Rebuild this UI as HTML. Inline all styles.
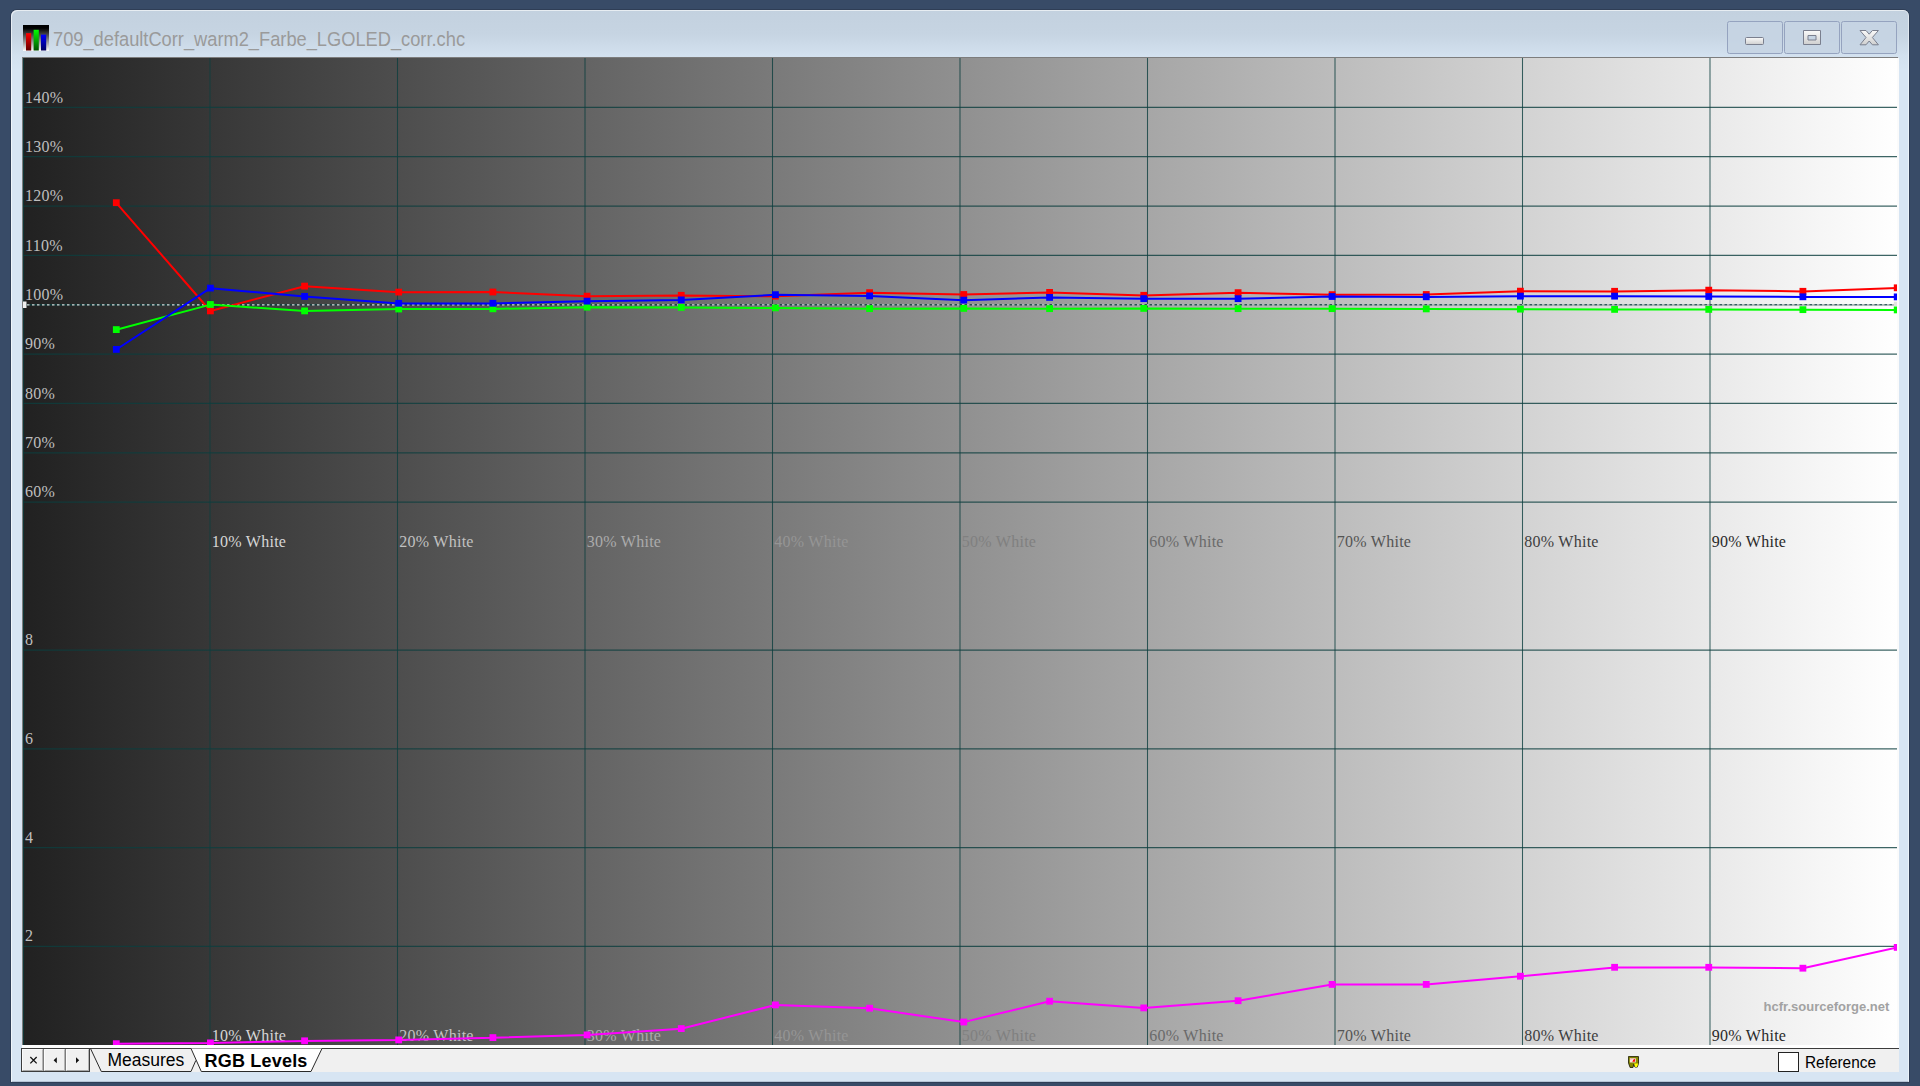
<!DOCTYPE html>
<html><head><meta charset="utf-8"><title>HCFR</title>
<style>
html,body{margin:0;padding:0;width:1920px;height:1086px;overflow:hidden;font-family:"Liberation Sans",sans-serif}
svg{display:block}
body{width:1920px;height:1086px;overflow:hidden;background:#384b67;position:relative;font-family:"Liberation Sans",sans-serif}
.abs{position:absolute}
#win{left:11px;top:10px;width:1898px;height:1072px;border-radius:6px 6px 0 0;
 background:linear-gradient(#c3d1df 0px,#c6d4e2 24px,#d3e1ef 46px,#d7e5f3 60px,#d7e5f3 100%);
 box-shadow:inset 1px 1px 0 0 rgba(255,255,255,.6),inset -1px 0 0 0 rgba(255,255,255,.45),inset 0 -1px 0 0 rgba(120,135,160,.35),0 0 0 1px rgba(40,52,72,.55)}
#title{left:53px;top:27px;font-size:20.5px;line-height:24px;color:#9a9a9a;white-space:nowrap;transform-origin:0 0;transform:scaleX(.8906)}
.btn{top:21px;width:54px;height:31px;border:1px solid #95a3bf;border-radius:2.5px;background:rgba(197,211,227,.85);box-sizing:content-box}
#chart{left:0;top:0}
.ax{font:16px "Liberation Serif",serif}
.xl{letter-spacing:.25px}
.yl{letter-spacing:.28px}
#edgeT{left:22px;top:57px;width:1876px;height:1px;background:#7d7d7d}
#edgeL{left:22px;top:57px;width:1px;height:989px;background:#7d7d7d}
#edgeR{left:1897px;top:58px;width:2px;height:990px;background:#fbfbfb}
#edgeB{left:22px;top:1045px;width:1877px;height:3px;background:#ffffff}
#strip{left:21px;top:1048px;width:1878px;height:24px;background:#f0f0f0;border-top:1px solid #3c3c3c;box-sizing:border-box}
#nav{left:21px;top:1048px;width:69px;height:24px;background:#3c3c3c}
.nb{top:1px;height:22px;width:21px;background:#f0f0f0;border:1px solid #fbfbfb;border-right-color:#b4b4b4;border-bottom-color:#a8a8a8;box-sizing:border-box}
.nd{top:1px;width:1px;height:22px;background:#7c7c7c}
#tabs{left:0;top:0}
.tab{top:1050px;font-size:17.5px;line-height:20px;color:#000;white-space:nowrap}
#ref{left:1805px;top:1052px;font-size:16.3px;line-height:20px;color:#000;white-space:nowrap;transform-origin:0 0;transform:scaleX(.945)}
#cb{left:1778px;top:1052px;width:21px;height:20px;box-sizing:border-box;border:1px solid #222;background:#fff}
</style></head><body>
<div id="win" class="abs"></div>
<svg class="abs" style="left:23px;top:25px" width="26" height="26" viewBox="0 0 26 27" preserveAspectRatio="none">
<defs><linearGradient id="ib" x1="0" x2="0" y1="0" y2="1"><stop offset="0" stop-color="#000"/><stop offset=".12" stop-color="#000"/><stop offset="1" stop-color="#fff"/></linearGradient>
<linearGradient id="ir" x1="0" x2="0" y1="0" y2="1"><stop offset="0" stop-color="#ff0000"/><stop offset="1" stop-color="#600000"/></linearGradient>
<linearGradient id="ig" x1="0" x2="0" y1="0" y2="1"><stop offset="0" stop-color="#00ff00"/><stop offset="1" stop-color="#005000"/></linearGradient>
<linearGradient id="iu" x1="0" x2="0" y1="0" y2="1"><stop offset="0" stop-color="#0000ff"/><stop offset="1" stop-color="#000060"/></linearGradient></defs>
<rect width="26" height="27" fill="url(#ib)"/>
<rect x="3" y="8.5" width="5.2" height="18" fill="url(#ir)"/>
<rect x="10.6" y="5" width="5.2" height="21.5" fill="url(#ig)"/>
<rect x="18" y="10" width="5.2" height="16.5" fill="url(#iu)"/>
</svg>
<div id="title" class="abs">709_defaultCorr_warm2_Farbe_LGOLED_corr.chc</div>
<div class="abs btn" style="left:1727px"></div>
<div class="abs btn" style="left:1784px"></div>
<div class="abs btn" style="left:1841px"></div>
<svg class="abs" style="left:1727px;top:21px" width="172" height="34" viewBox="1727 21 172 34">
<defs><linearGradient id="gl" x1="0" x2="0" y1="0" y2="1"><stop offset="0" stop-color="#fafafa"/><stop offset="1" stop-color="#cfcfcf"/></linearGradient></defs>
<rect x="1745.5" y="37.5" width="18" height="7" rx="1" fill="url(#gl)" stroke="#7a7f8e" stroke-width="1"/>
<path d="M1803.5 30.5h17v14h-17z M1808 35.5v4.5h8v-4.5z" fill="url(#gl)" fill-rule="evenodd" stroke="#7a7f8e" stroke-width="1" stroke-linejoin="miter"/>
<path d="M1860 30.5H1866L1869.2 34.2L1872.4 30.5H1878.4L1872.4 37.5L1878.4 44.8H1872.4L1869.2 41L1866 44.8H1860L1866 37.5Z" fill="url(#gl)" stroke="#7a7f8e" stroke-width="1" stroke-linejoin="round"/>
</svg>
<div id="edgeT" class="abs"></div><div id="edgeL" class="abs"></div><div id="edgeR" class="abs"></div><div id="edgeB" class="abs"></div>
<div class="abs" style="left:0;top:0;width:1920px;height:1086px"><svg id="chart" width="1920" height="1086" viewBox="0 0 1920 1086">
<defs><linearGradient id="bg" x1="23" x2="1897" y1="0" y2="0" gradientUnits="userSpaceOnUse"><stop offset="0" stop-color="#212121"/><stop offset="1" stop-color="#ffffff"/></linearGradient><clipPath id="cp"><rect x="23" y="58" width="1874" height="987"/></clipPath></defs>
<rect x="23" y="58" width="1874" height="987" fill="url(#bg)"/>
<g clip-path="url(#cp)">
<line x1="23.5" x2="23.5" y1="58" y2="1045" stroke="rgba(12,62,62,0.8)" stroke-width="1"/>
<line x1="210.0" x2="210.0" y1="58" y2="1045" stroke="rgba(12,62,62,0.8)" stroke-width="1.05"/>
<line x1="397.5" x2="397.5" y1="58" y2="1045" stroke="rgba(12,62,62,0.8)" stroke-width="1.05"/>
<line x1="585.0" x2="585.0" y1="58" y2="1045" stroke="rgba(12,62,62,0.8)" stroke-width="1.05"/>
<line x1="772.5" x2="772.5" y1="58" y2="1045" stroke="rgba(12,62,62,0.8)" stroke-width="1.05"/>
<line x1="960.0" x2="960.0" y1="58" y2="1045" stroke="rgba(12,62,62,0.8)" stroke-width="1.05"/>
<line x1="1147.5" x2="1147.5" y1="58" y2="1045" stroke="rgba(12,62,62,0.8)" stroke-width="1.05"/>
<line x1="1335.0" x2="1335.0" y1="58" y2="1045" stroke="rgba(12,62,62,0.8)" stroke-width="1.05"/>
<line x1="1522.5" x2="1522.5" y1="58" y2="1045" stroke="rgba(12,62,62,0.8)" stroke-width="1.05"/>
<line x1="1710.0" x2="1710.0" y1="58" y2="1045" stroke="rgba(12,62,62,0.8)" stroke-width="1.05"/>
<line x1="23" x2="1897" y1="107.35" y2="107.35" stroke="rgba(12,62,62,0.8)" stroke-width="1.2"/>
<line x1="23" x2="1897" y1="156.70" y2="156.70" stroke="rgba(12,62,62,0.8)" stroke-width="1.2"/>
<line x1="23" x2="1897" y1="206.05" y2="206.05" stroke="rgba(12,62,62,0.8)" stroke-width="1.2"/>
<line x1="23" x2="1897" y1="255.40" y2="255.40" stroke="rgba(12,62,62,0.8)" stroke-width="1.2"/>
<line x1="23" x2="1897" y1="304.75" y2="304.75" stroke="rgba(12,62,62,0.8)" stroke-width="1.2"/>
<line x1="23" x2="1897" y1="354.10" y2="354.10" stroke="rgba(12,62,62,0.8)" stroke-width="1.2"/>
<line x1="23" x2="1897" y1="403.45" y2="403.45" stroke="rgba(12,62,62,0.8)" stroke-width="1.2"/>
<line x1="23" x2="1897" y1="452.80" y2="452.80" stroke="rgba(12,62,62,0.8)" stroke-width="1.2"/>
<line x1="23" x2="1897" y1="502.15" y2="502.15" stroke="rgba(12,62,62,0.8)" stroke-width="1.2"/>
<line x1="23" x2="1897" y1="650.20" y2="650.20" stroke="rgba(12,62,62,0.8)" stroke-width="1.2"/>
<line x1="23" x2="1897" y1="748.90" y2="748.90" stroke="rgba(12,62,62,0.8)" stroke-width="1.2"/>
<line x1="23" x2="1897" y1="847.60" y2="847.60" stroke="rgba(12,62,62,0.8)" stroke-width="1.2"/>
<line x1="23" x2="1897" y1="946.30" y2="946.30" stroke="rgba(12,62,62,0.8)" stroke-width="1.2"/>
<line x1="23" x2="1897" y1="304.8" y2="304.8" stroke="rgba(14,66,66,0.55)" stroke-width="1.5"/>
<line x1="23" x2="1897" y1="304.8" y2="304.8" stroke="#d8d8d8" stroke-width="1.3" stroke-dasharray="2.5 2.5" stroke-dashoffset="1"/>
<rect x="23" y="301.5" width="3.5" height="6.5" fill="#f0f0f0"/>
<rect x="1893.8" y="301.7" width="3.5" height="4.5" fill="#e2e2e2"/>
<text x="25.0" y="102.6" class="ax yl" fill="#bfbfbf">140%</text>
<text x="25.0" y="151.9" class="ax yl" fill="#bfbfbf">130%</text>
<text x="25.0" y="201.3" class="ax yl" fill="#bfbfbf">120%</text>
<text x="25.0" y="250.7" class="ax yl" fill="#bfbfbf">110%</text>
<text x="25.0" y="300.0" class="ax yl" fill="#bfbfbf">100%</text>
<text x="25.0" y="349.4" class="ax yl" fill="#bfbfbf">90%</text>
<text x="25.0" y="398.7" class="ax yl" fill="#bfbfbf">80%</text>
<text x="25.0" y="448.1" class="ax yl" fill="#bfbfbf">70%</text>
<text x="25.0" y="497.4" class="ax yl" fill="#bfbfbf">60%</text>
<text x="25.0" y="645.3" class="ax yl" fill="#bfbfbf">8</text>
<text x="25.0" y="744.0" class="ax yl" fill="#bfbfbf">6</text>
<text x="25.0" y="842.7" class="ax yl" fill="#bfbfbf">4</text>
<text x="25.0" y="941.4" class="ax yl" fill="#bfbfbf">2</text>
<text x="211.8" y="546.8" class="ax xl" fill="rgb(214,214,214)">10% White</text>
<text x="211.8" y="1040.8" class="ax xl" fill="rgb(214,214,214)">10% White</text>
<text x="399.3" y="546.8" class="ax xl" fill="rgb(193,193,193)">20% White</text>
<text x="399.3" y="1040.8" class="ax xl" fill="rgb(193,193,193)">20% White</text>
<text x="586.8" y="546.8" class="ax xl" fill="rgb(171,171,171)">30% White</text>
<text x="586.8" y="1040.8" class="ax xl" fill="rgb(171,171,171)">30% White</text>
<text x="774.3" y="546.8" class="ax xl" fill="rgb(149,149,149)">40% White</text>
<text x="774.3" y="1040.8" class="ax xl" fill="rgb(149,149,149)">40% White</text>
<text x="961.8" y="546.8" class="ax xl" fill="rgb(128,128,128)">50% White</text>
<text x="961.8" y="1040.8" class="ax xl" fill="rgb(128,128,128)">50% White</text>
<text x="1149.3" y="546.8" class="ax xl" fill="rgb(106,106,106)">60% White</text>
<text x="1149.3" y="1040.8" class="ax xl" fill="rgb(106,106,106)">60% White</text>
<text x="1336.8" y="546.8" class="ax xl" fill="rgb(84,84,84)">70% White</text>
<text x="1336.8" y="1040.8" class="ax xl" fill="rgb(84,84,84)">70% White</text>
<text x="1524.3" y="546.8" class="ax xl" fill="rgb(62,62,62)">80% White</text>
<text x="1524.3" y="1040.8" class="ax xl" fill="rgb(62,62,62)">80% White</text>
<text x="1711.8" y="546.8" class="ax xl" fill="rgb(41,41,41)">90% White</text>
<text x="1711.8" y="1040.8" class="ax xl" fill="rgb(41,41,41)">90% White</text>
<text x="1889.3" y="1011" text-anchor="end" style="font:bold 13px 'Liberation Sans',sans-serif" fill="#a2a2a2">hcfr.sourceforge.net</text>
<polyline points="116.30,1043.80 210.40,1043.00 304.60,1040.90 398.70,1040.00 492.90,1037.70 587.10,1035.00 681.25,1028.70 775.40,1005.00 869.60,1008.30 963.75,1022.10 1049.60,1001.30 1143.75,1008.00 1238.10,1000.80 1332.10,984.50 1426.25,984.50 1520.40,976.30 1614.60,967.40 1708.75,967.40 1802.90,968.30 1897.20,947.50" fill="none" stroke="#ff00ff" stroke-width="2" stroke-linejoin="bevel"/>
<rect x="112.90" y="1040.30" width="6.8" height="6.8" fill="#ff00ff"/><rect x="207.00" y="1039.50" width="6.8" height="6.8" fill="#ff00ff"/><rect x="301.20" y="1037.40" width="6.8" height="6.8" fill="#ff00ff"/><rect x="395.30" y="1036.50" width="6.8" height="6.8" fill="#ff00ff"/><rect x="489.50" y="1034.20" width="6.8" height="6.8" fill="#ff00ff"/><rect x="583.70" y="1031.50" width="6.8" height="6.8" fill="#ff00ff"/><rect x="677.85" y="1025.20" width="6.8" height="6.8" fill="#ff00ff"/><rect x="772.00" y="1001.50" width="6.8" height="6.8" fill="#ff00ff"/><rect x="866.20" y="1004.80" width="6.8" height="6.8" fill="#ff00ff"/><rect x="960.35" y="1018.60" width="6.8" height="6.8" fill="#ff00ff"/><rect x="1046.20" y="997.80" width="6.8" height="6.8" fill="#ff00ff"/><rect x="1140.35" y="1004.50" width="6.8" height="6.8" fill="#ff00ff"/><rect x="1234.70" y="997.30" width="6.8" height="6.8" fill="#ff00ff"/><rect x="1328.70" y="981.00" width="6.8" height="6.8" fill="#ff00ff"/><rect x="1422.85" y="981.00" width="6.8" height="6.8" fill="#ff00ff"/><rect x="1517.00" y="972.80" width="6.8" height="6.8" fill="#ff00ff"/><rect x="1611.20" y="963.90" width="6.8" height="6.8" fill="#ff00ff"/><rect x="1705.35" y="963.90" width="6.8" height="6.8" fill="#ff00ff"/><rect x="1799.50" y="964.80" width="6.8" height="6.8" fill="#ff00ff"/><rect x="1893.80" y="944.00" width="6.8" height="6.8" fill="#ff00ff"/>

<polyline points="116.30,202.80 210.40,311.00 304.60,286.20 398.70,292.20 492.90,292.10 587.10,296.25 681.25,295.40 775.40,296.25 869.60,292.75 963.75,294.60 1049.60,292.50 1143.75,295.40 1238.10,292.75 1332.10,294.75 1426.25,294.60 1520.40,291.25 1614.60,291.40 1708.75,290.25 1802.90,291.40 1897.20,287.90" fill="none" stroke="#ff0000" stroke-width="2" stroke-linejoin="bevel"/>
<rect x="112.90" y="199.30" width="6.8" height="6.8" fill="#ff0000"/><rect x="207.00" y="307.50" width="6.8" height="6.8" fill="#ff0000"/><rect x="301.20" y="282.70" width="6.8" height="6.8" fill="#ff0000"/><rect x="395.30" y="288.70" width="6.8" height="6.8" fill="#ff0000"/><rect x="489.50" y="288.60" width="6.8" height="6.8" fill="#ff0000"/><rect x="583.70" y="292.75" width="6.8" height="6.8" fill="#ff0000"/><rect x="677.85" y="291.90" width="6.8" height="6.8" fill="#ff0000"/><rect x="772.00" y="292.75" width="6.8" height="6.8" fill="#ff0000"/><rect x="866.20" y="289.25" width="6.8" height="6.8" fill="#ff0000"/><rect x="960.35" y="291.10" width="6.8" height="6.8" fill="#ff0000"/><rect x="1046.20" y="289.00" width="6.8" height="6.8" fill="#ff0000"/><rect x="1140.35" y="291.90" width="6.8" height="6.8" fill="#ff0000"/><rect x="1234.70" y="289.25" width="6.8" height="6.8" fill="#ff0000"/><rect x="1328.70" y="291.25" width="6.8" height="6.8" fill="#ff0000"/><rect x="1422.85" y="291.10" width="6.8" height="6.8" fill="#ff0000"/><rect x="1517.00" y="287.75" width="6.8" height="6.8" fill="#ff0000"/><rect x="1611.20" y="287.90" width="6.8" height="6.8" fill="#ff0000"/><rect x="1705.35" y="286.75" width="6.8" height="6.8" fill="#ff0000"/><rect x="1799.50" y="287.90" width="6.8" height="6.8" fill="#ff0000"/><rect x="1893.80" y="284.40" width="6.8" height="6.8" fill="#ff0000"/>

<polyline points="116.30,329.70 210.40,304.60 304.60,311.00 398.70,309.10 492.90,308.90 587.10,307.25 681.25,307.50 775.40,308.00 869.60,308.75 963.75,308.50 1049.60,308.75 1143.75,308.50 1238.10,308.75 1332.10,308.75 1426.25,309.00 1520.40,309.25 1614.60,309.50 1708.75,309.50 1802.90,309.75 1897.20,310.00" fill="none" stroke="#00ff00" stroke-width="2" stroke-linejoin="bevel"/>
<rect x="112.90" y="326.20" width="6.8" height="6.8" fill="#00ff00"/><rect x="207.00" y="301.10" width="6.8" height="6.8" fill="#00ff00"/><rect x="301.20" y="307.50" width="6.8" height="6.8" fill="#00ff00"/><rect x="395.30" y="305.60" width="6.8" height="6.8" fill="#00ff00"/><rect x="489.50" y="305.40" width="6.8" height="6.8" fill="#00ff00"/><rect x="583.70" y="303.75" width="6.8" height="6.8" fill="#00ff00"/><rect x="677.85" y="304.00" width="6.8" height="6.8" fill="#00ff00"/><rect x="772.00" y="304.50" width="6.8" height="6.8" fill="#00ff00"/><rect x="866.20" y="305.25" width="6.8" height="6.8" fill="#00ff00"/><rect x="960.35" y="305.00" width="6.8" height="6.8" fill="#00ff00"/><rect x="1046.20" y="305.25" width="6.8" height="6.8" fill="#00ff00"/><rect x="1140.35" y="305.00" width="6.8" height="6.8" fill="#00ff00"/><rect x="1234.70" y="305.25" width="6.8" height="6.8" fill="#00ff00"/><rect x="1328.70" y="305.25" width="6.8" height="6.8" fill="#00ff00"/><rect x="1422.85" y="305.50" width="6.8" height="6.8" fill="#00ff00"/><rect x="1517.00" y="305.75" width="6.8" height="6.8" fill="#00ff00"/><rect x="1611.20" y="306.00" width="6.8" height="6.8" fill="#00ff00"/><rect x="1705.35" y="306.00" width="6.8" height="6.8" fill="#00ff00"/><rect x="1799.50" y="306.25" width="6.8" height="6.8" fill="#00ff00"/><rect x="1893.80" y="306.50" width="6.8" height="6.8" fill="#00ff00"/>

<polyline points="116.30,349.50 210.40,288.20 304.60,296.50 398.70,303.40 492.90,303.40 587.10,301.25 681.25,300.00 775.40,294.75 869.60,296.00 963.75,300.25 1049.60,297.50 1143.75,298.75 1238.10,298.75 1332.10,296.60 1426.25,296.90 1520.40,296.25 1614.60,296.25 1708.75,296.60 1802.90,296.90 1897.20,297.00" fill="none" stroke="#0000ff" stroke-width="2" stroke-linejoin="bevel"/>
<rect x="112.90" y="346.00" width="6.8" height="6.8" fill="#0000ff"/><rect x="207.00" y="284.70" width="6.8" height="6.8" fill="#0000ff"/><rect x="301.20" y="293.00" width="6.8" height="6.8" fill="#0000ff"/><rect x="395.30" y="299.90" width="6.8" height="6.8" fill="#0000ff"/><rect x="489.50" y="299.90" width="6.8" height="6.8" fill="#0000ff"/><rect x="583.70" y="297.75" width="6.8" height="6.8" fill="#0000ff"/><rect x="677.85" y="296.50" width="6.8" height="6.8" fill="#0000ff"/><rect x="772.00" y="291.25" width="6.8" height="6.8" fill="#0000ff"/><rect x="866.20" y="292.50" width="6.8" height="6.8" fill="#0000ff"/><rect x="960.35" y="296.75" width="6.8" height="6.8" fill="#0000ff"/><rect x="1046.20" y="294.00" width="6.8" height="6.8" fill="#0000ff"/><rect x="1140.35" y="295.25" width="6.8" height="6.8" fill="#0000ff"/><rect x="1234.70" y="295.25" width="6.8" height="6.8" fill="#0000ff"/><rect x="1328.70" y="293.10" width="6.8" height="6.8" fill="#0000ff"/><rect x="1422.85" y="293.40" width="6.8" height="6.8" fill="#0000ff"/><rect x="1517.00" y="292.75" width="6.8" height="6.8" fill="#0000ff"/><rect x="1611.20" y="292.75" width="6.8" height="6.8" fill="#0000ff"/><rect x="1705.35" y="293.10" width="6.8" height="6.8" fill="#0000ff"/><rect x="1799.50" y="293.40" width="6.8" height="6.8" fill="#0000ff"/><rect x="1893.80" y="293.50" width="6.8" height="6.8" fill="#0000ff"/>

</g>
</svg></div>
<div id="strip" class="abs"></div>
<div id="nav" class="abs"><div class="abs nb" style="left:1px"></div><div class="abs nd" style="left:22px"></div><div class="abs nb" style="left:23px"></div><div class="abs nd" style="left:44px"></div><div class="abs nb" style="left:45px;width:23px"></div></div>
<svg id="tabs" class="abs" width="1920" height="1086" viewBox="0 0 1920 1086">
<g stroke="#111" stroke-width="1.3" fill="none" stroke-linecap="square">
<path d="M30.8 1057.5l5.4 5.4M36.2 1057.5l-5.4 5.4"/>
</g>
<path d="M56.8 1057.2v6l-3.2-3z" fill="#111"/><path d="M76 1057.2v6l3.2-3z" fill="#111"/>
<path d="M191 1048.5L201.3 1071.5H311L322 1048.5z" fill="#fff"/>
<g stroke="#2a2a2a" stroke-width="1" fill="none">
<path d="M90.5 1048.5L101.3 1071.5H191L195.8 1060.5"/>
<path d="M191 1048.5L201.3 1071.5H311L322 1048.5"/>
</g>
</svg>
<div class="abs tab" style="left:107.5px">Measures</div>
<div class="abs tab" style="left:204.5px;top:1051px;font-weight:bold;font-size:18px;letter-spacing:.2px">RGB Levels</div>
<div id="cb" class="abs"></div>
<div id="ref" class="abs">Reference</div>
<svg class="abs" style="left:1627.5px;top:1056px" width="12" height="12.2" viewBox="0 0 13 13" preserveAspectRatio="none">
<path d="M0.4 0.6h11v7.2l-1.3 4H7.5L6.3 8.6l-.9 3.7H2.3L0.6 7.6z" fill="#858600" stroke="#1c1c00" stroke-width=".9" stroke-linejoin="round"/>
<path d="M6.6 8h4.4l-1.2 3.6H7.8z" fill="#ffff00"/>
<rect x="2" y="2.4" width="6.4" height="4.5" fill="#f8e4e0"/>
<path d="M4.6 6h2.9V2.9L6 3.6z" fill="#ff0000"/>
<path d="M2.6 3.8Q3.6 2.8 5 2.9" stroke="#ff8a8a" stroke-width=".8" fill="none"/>
<rect x="8.7" y="1.8" width="1.9" height="5.4" fill="#8e9000"/>
</svg>
</body></html>
